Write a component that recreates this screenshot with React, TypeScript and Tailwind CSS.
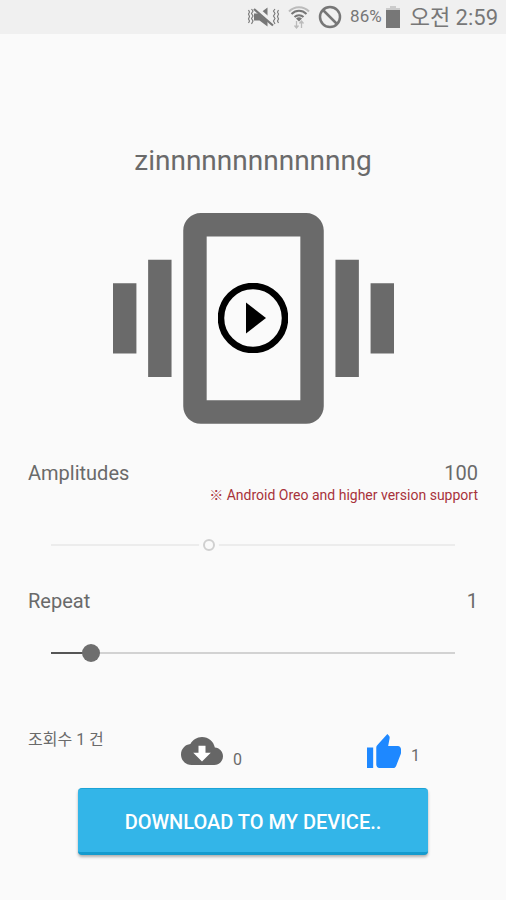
import { useState } from "react";

function MutedVibrateIcon() {
  return (
    <svg width="33" height="22" viewBox="0 0 33 22" fill="none" stroke="#777" aria-hidden="true">
      <path d="M7 7.500h5.500l8-6v19l-8-6H7z" fill="#777" stroke="none" />
      <path d="M8.500 2 27.500 18.500" stroke="#f0f0f0" strokeWidth="4.500" />
      <path d="M7 3 26 19.500" strokeWidth="2.200" />
      <path d="M4.500 3 6 5 4.500 7.500 6 10 4.500 12.500 6 15 4.500 18M1.500 4 2.500 6 1.500 8 2.500 10.500 1.500 13 2.500 15 1.500 17" strokeWidth="1.100" />
      <path d="M28 3 26.500 5 28 7.500 26.500 10 28 12.500 26.500 15 28 18M31.500 4 30.500 6 31.500 8 30.500 10.500 31.500 13 30.500 15 31.500 17" strokeWidth="1.100" />
    </svg>
  );
}

function WifiIcon() {
  return (
    <svg width="22" height="24" viewBox="0 0 22 24" fill="none" aria-hidden="true">
      <path d="M1 6.500C6.500.800 15.500.800 21 6.500" stroke="#bbb" strokeWidth="2" />
      <path d="M3.500 9C8 4.800 14 4.800 18.500 9M6.500 12C9 9.600 13 9.600 15.500 12" stroke="#777" strokeWidth="2" />
      <path d="M8 13.500a4.500 4.500 0 0 1 6 0L11 16.500z" fill="#777" />
      <path d="M8.500 16v6.500M6.500 20.500l2 2.500 2-2.500M13.500 23v-6.500M11.500 18.500l2-2.500 2 2.500" stroke="#bbb" strokeWidth="1.300" />
    </svg>
  );
}

function BlockedIcon() {
  return (
    <svg width="24" height="24" viewBox="0 0 24 24" fill="none" stroke="#777" strokeWidth="2.500" aria-hidden="true">
      <circle cx="12" cy="12" r="10" />
      <path d="M5 5l14 14" />
    </svg>
  );
}

function BatteryIcon() {
  return (
    <svg width="14" height="22" viewBox="0 0 14 22" aria-hidden="true">
      <path d="M4 0h6v2h4v3H0V2h4z" fill="#ccc" />
      <path d="M0 4h14v18H0z" fill="#777" />
    </svg>
  );
}

function VibrationIcon() {
  return (
    <svg viewBox="0 0 24 18" className="w-full" fill="#6a6a6a" aria-hidden="true">
      <path d="M0 12h2V6H0zM3 14h2V4H3zM22 6v6h2V6zM19 14h2V4h-2z" />
      <path d="M16.500 0h-9C6.670 0 6 .670 6 1.500v15c0 .830.670 1.500 1.500 1.500h9c.830 0 1.500-.670 1.500-1.500v-15c0-.830-.670-1.500-1.500-1.500zM16 16H8V2h8z" />
    </svg>
  );
}

function StatusBar() {
  return (
    <header className="flex h-[34px] items-center justify-end bg-[#f0f0f0] pr-2 text-[#777]">
      <MutedVibrateIcon />
      <span className="ml-2 flex"><WifiIcon /></span>
      <span className="ml-2 flex"><BlockedIcon /></span>
      <span className="ml-2 text-[17px]">86%</span>
      <span className="ml-1 flex"><BatteryIcon /></span>
      <span className="ml-2.5 text-[22px]">오전 2:59</span>
    </header>
  );
}

export default function App() {
  const [amplitude, setAmplitude] = useState(100);
  const [repeat, setRepeat] = useState(1);

  return (
    <div className="min-h-screen bg-[#fafafa] font-[Roboto,'Noto_Sans_CJK_KR',sans-serif] text-[#6a6a6a]">
      <StatusBar />
      <main className="px-7 pb-11">
        <h1 className="pt-[109px] text-center text-[28px] leading-9">zinnnnnnnnnnnnng</h1>

        <div className="mx-auto mt-[34px] grid w-[281px] place-items-center">
          <div className="col-start-1 row-start-1 w-full"><VibrationIcon /></div>
          <button type="button" aria-label="Play" className="col-start-1 row-start-1 rounded-full text-black">
            <svg width="70" height="70" viewBox="0 0 70 70" aria-hidden="true">
              <circle cx="35" cy="35" r="32" fill="none" stroke="currentColor" strokeWidth="6.500" />
              <path d="M28 19.500v31L48 35z" fill="currentColor" />
            </svg>
          </button>
        </div>

        <section className="mt-[35px]">
          <div className="flex justify-between text-[20px] leading-7">
            <label htmlFor="amplitude">Amplitudes</label>
            <output htmlFor="amplitude">{amplitude}</output>
          </div>
          <p className="text-right text-[14px] leading-4 text-[#a8323a]">※ Android Oreo and higher version support</p>
          <div className="mt-8 px-[17px]">
            <input
              id="amplitude"
              type="range"
              min={0}
              max={255}
              value={amplitude}
              disabled
              onChange={(e) => setAmplitude(Number(e.target.value))}
              className="block h-5 w-full appearance-none bg-[linear-gradient(#ececec,#ececec)] bg-[length:calc(100%-12px)_2px] bg-center bg-no-repeat [&::-webkit-slider-thumb]:size-3 [&::-webkit-slider-thumb]:appearance-none [&::-webkit-slider-thumb]:rounded-full [&::-webkit-slider-thumb]:border-2 [&::-webkit-slider-thumb]:border-solid [&::-webkit-slider-thumb]:border-[#d0d0d0] [&::-webkit-slider-thumb]:bg-[#fafafa] [&::-webkit-slider-thumb]:shadow-[0_0_0_4px_#fafafa]"
            />
          </div>
        </section>

        <section className="mt-8">
          <div className="flex justify-between text-[20px] leading-7">
            <label htmlFor="repeat">Repeat</label>
            <output htmlFor="repeat">{repeat}</output>
          </div>
          <div className="mt-7 px-[14px]">
            <input
              id="repeat"
              type="range"
              min={0}
              max={10}
              value={repeat}
              onChange={(e) => setRepeat(Number(e.target.value))}
              style={{
                backgroundImage: `linear-gradient(to right, #555 ${repeat * 10}%, #d2d2d2 ${repeat * 10}%)`,
              }}
              className="block h-5 w-full appearance-none bg-[length:calc(100%-18px)_2px] bg-center bg-no-repeat [&::-webkit-slider-thumb]:size-[18px] [&::-webkit-slider-thumb]:appearance-none [&::-webkit-slider-thumb]:rounded-full [&::-webkit-slider-thumb]:bg-[#6e6e6e]"
            />
          </div>
        </section>

        <section className="mt-16 grid grid-cols-[153px_1fr_auto] items-start">
          <p className="pt-px text-base leading-6">조회수 1 건</p>
          <div className="flex items-end gap-2.5 pt-[3px]">
            <svg width="42" height="42" viewBox="0 0 24 24" aria-hidden="true">
              <path d="M19.350 10.040C18.670 6.590 15.640 4 12 4 9.110 4 6.600 5.640 5.350 8.040 2.340 8.360 0 10.910 0 14c0 3.310 2.690 6 6 6h13c2.760 0 5-2.240 5-5 0-2.640-2.050-4.780-4.650-4.960z" fill="#666" />
              <path d="M17 13l-5 5-5-5h3V9h4v4z" fill="#fff" />
            </svg>
            <span className="text-base leading-6">0</span>
          </div>
          <div className="flex items-end gap-2.5 pr-[58px] pt-[7px]">
            <button type="button" aria-label="Like">
              <svg width="34" height="34" viewBox="1 1 22 20" preserveAspectRatio="none" fill="#1e88ff" aria-hidden="true">
                <path d="M1 21h4V9H1v12zm22-11c0-1.100-.900-2-2-2h-6.310l.950-4.570.030-.320c0-.410-.170-.790-.440-1.060L14.170 1 7.590 7.590C7.220 7.950 7 8.450 7 9v10c0 1.100.900 2 2 2h9c.830 0 1.540-.500 1.840-1.220l3.020-7.050c.090-.230.140-.470.140-.730v-2z" />
              </svg>
            </button>
            <span className="text-base leading-6">1</span>
          </div>
        </section>

        <div className="mt-4 px-[50px]">
          <button
            type="button"
            className="block h-[67px] w-full rounded-[4px] border-t border-b-3 border-t-[#1ba3d6] border-b-[#149bce] bg-[#33b5e8] pt-1 text-[20px] font-medium text-white shadow-[0_2px_3px_rgba(0,0,0,0.3)]"
          >
            DOWNLOAD TO MY DEVICE..
          </button>
        </div>
      </main>
    </div>
  );
}
